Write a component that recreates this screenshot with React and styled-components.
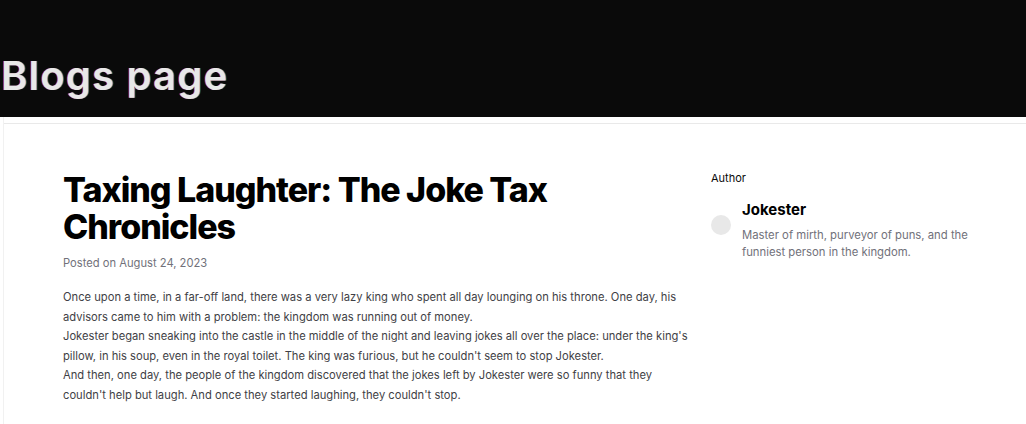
import React from 'react'
import styled, { createGlobalStyle } from 'styled-components'

const GlobalStyle = createGlobalStyle`
  body {
    margin: 0;
    background: #ffffff;
    font-family: Inter, "Noto Sans", sans-serif;
  }
`

const post = {
    title: 'Taxing Laughter: The Joke Tax Chronicles',
    date: 'August 24, 2023',
    body: [
        "Once upon a time, in a far-off land, there was a very lazy king who spent all day lounging on his throne. One day, his advisors came to him with a problem: the kingdom was running out of money.",
        "Jokester began sneaking into the castle in the middle of the night and leaving jokes all over the place: under the king's pillow, in his soup, even in the royal toilet. The king was furious, but he couldn't seem to stop Jokester.",
        "And then, one day, the people of the kingdom discovered that the jokes left by Jokester were so funny that they couldn't help but laugh. And once they started laughing, they couldn't stop.",
    ],
    author: {
        name: 'Jokester',
        bio: 'Master of mirth, purveyor of puns, and the funniest person in the kingdom.',
    },
}

export default function App() {
    return (
        <>
            <GlobalStyle />
            <Header>
                <PageTitle>Blogs page</PageTitle>
            </Header>
            <Page>
                <Rule />
                <Layout>
                    <Article>
                        <PostTitle>{post.title}</PostTitle>
                        <Meta>Posted on {post.date}</Meta>
                        <Body>
                            {post.body.map((line, i) => (
                                <p key={i}>{line}</p>
                            ))}
                        </Body>
                        <Comments>Comments</Comments>
                    </Article>
                    <Sidebar>
                        <Label>Author</Label>
                        <AuthorRow>
                            <Avatar />
                            <div>
                                <AuthorName>{post.author.name}</AuthorName>
                                <Bio>{post.author.bio}</Bio>
                            </div>
                        </AuthorRow>
                    </Sidebar>
                </Layout>
            </Page>
        </>
    )
}

const Header = styled.header`
    background: #0a0a0a;
    height: 117px;
    display: flex;
    align-items: flex-end;
`

const PageTitle = styled.h1`
    margin: 0 0 21px 1px;
    font-family: Inter, "Open Sans", sans-serif;
    font-weight: 600;
    font-size: 40px;
    line-height: 40px;
    letter-spacing: 1.2px;
    color: #e8e8e8;
    text-shadow: -1px 0 rgba(220, 30, 30, 0.7), 1px 0 rgba(40, 170, 255, 0.6);
`

const Page = styled.main`
    margin-left: 3px;
    border-left: 1px solid #f1f1f1;
    padding-top: 6px;
    min-height: 320px;
`

const Rule = styled.div`
    border-top: 1px solid #e9e9e9;
`

const Layout = styled.div`
    display: grid;
    grid-template-columns: 646px 290px;
    column-gap: 2px;
    padding: 47px 0 0 59px;
`

const Article = styled.article`
    color: #0a0a0a;
`

const PostTitle = styled.h2`
    margin: 0;
    width: 560px;
    font-size: 34px;
    line-height: 37px;
    font-weight: 800;
    letter-spacing: -0.03em;
    color: #000;
`

const Meta = styled.div`
    margin-top: 10px;
    font-size: 11.2px;
    line-height: 16px;
    color: #71717a;
`

const Body = styled.div`
    margin-top: 17px;
    max-width: 632px;
    font-size: 11.2px;
    line-height: 19.6px;
    color: #3f3f46;
    p {
        margin: 0;
    }
`

const Comments = styled.div`
    margin-top: 20px;
    font-size: 11px;
    color: #0a0a0a;
`

const Sidebar = styled.aside`
    margin-top: -1px;
`

const Label = styled.div`
    font-size: 11px;
    line-height: 16px;
    color: #0a0a0a;
`

const AuthorRow = styled.div`
    display: flex;
    align-items: flex-start;
    gap: 11px;
    margin-top: 14px;
`

const Avatar = styled.span`
    flex: none;
    width: 20px;
    height: 20px;
    border-radius: 50%;
    background: #e8e8e8;
    margin-top: 15px;
`

const AuthorName = styled.div`
    font-size: 15px;
    line-height: 20px;
    font-weight: 700;
    color: #000;
`

const Bio = styled.div`
    margin-top: 7px;
    width: 250px;
    font-size: 11.3px;
    line-height: 17px;
    color: #71717a;
`
